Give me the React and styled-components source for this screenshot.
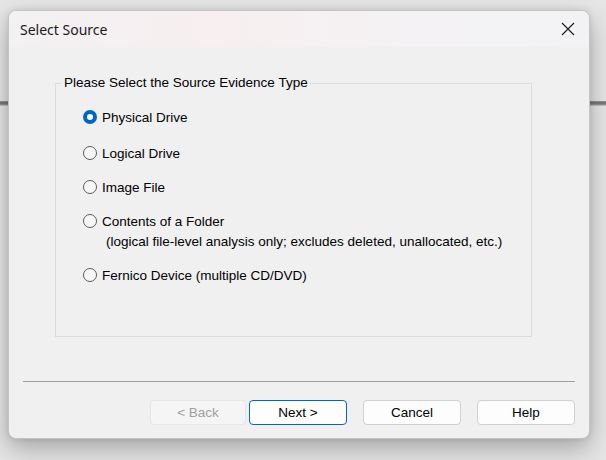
import { useState } from 'react'
import styled, { createGlobalStyle } from 'styled-components'

const GlobalStyle = createGlobalStyle`
  html, body {
    margin: 0;
    padding: 0;
  }
  body {
    width: 606px;
    height: 460px;
    overflow: hidden;
    background:
      linear-gradient(
        to bottom,
        transparent 0,
        transparent 101px,
        #9a9a9a 101px,
        #6e6e6e 103px,
        #9a9a9a 105px,
        transparent 106px
      ),
      #e6e6e6;
  }
`

const Desktop = styled.div`
  padding: 10px 16px 0 8px;
`

const Window = styled.div`
  width: 582px;
  height: 429px;
  box-sizing: border-box;
  display: flex;
  flex-direction: column;
  background: #f0f0f0;
  border: 1px solid #c4c4c4;
  border-radius: 8px;
  overflow: hidden;
  box-shadow: 0 10px 26px rgba(0, 0, 0, 0.28), 0 0 6px rgba(0, 0, 0, 0.1);
`

const TitleBar = styled.div`
  height: 36px;
  flex: none;
  display: flex;
  align-items: center;
  justify-content: space-between;
  padding-left: 11px;
  background: linear-gradient(to right, #f3f1f3 0%, #f7eff0 35%, #f4f2f4 70%, #f2f2f5 100%);
`

const Title = styled.div`
  font-family: "Noto Sans", sans-serif;
  font-size: 14px;
  color: #1a1a1a;
  margin-top: 1px;
`

const CloseButton = styled.button`
  width: 46px;
  height: 36px;
  border: none;
  background: transparent;
  display: flex;
  align-items: center;
  justify-content: center;
  padding: 0;
  margin-right: -2px;
`

const Body = styled.div`
  flex: 1;
  display: flex;
  flex-direction: column;
  padding: 28px 14px 13px;
  font-family: "Liberation Sans", Arial, sans-serif;
  font-size: 13.5px;
  color: #000;
`

const Group = styled.fieldset`
  margin: 0 43px 0 32px;
  height: 262px;
  box-sizing: border-box;
  border: 1px solid #dcdcdc;
  padding: 16px 0 0 27px;
  display: flex;
  flex-direction: column;
  gap: 14px;
`

const Legend = styled.legend`
  margin-left: -21px;
  padding: 0 2px;
  line-height: 16px;
`

const Option = styled.label`
  display: flex;
  flex-direction: column;

  &:first-of-type {
    margin-bottom: 2px;
  }
`

const OptionRow = styled.div`
  display: flex;
  align-items: center;
  height: 20px;
  gap: 5px;
  cursor: default;
`

const Radio = styled.span`
  width: 14px;
  height: 14px;
  box-sizing: border-box;
  border-radius: 50%;
  flex: none;
  border: ${p => (p.$checked ? '4px solid #0067c0' : '1px solid #5c5c5c')};
  background: ${p => (p.$checked ? '#fff' : '#f6f6f6')};
`

const Note = styled.div`
  margin: 1px 0 0 23px;
  line-height: 19px;
`

const Separator = styled.hr`
  margin: 44px 0 0;
  border: none;
  border-top: 1px solid #a0a0a0;
  height: 0;
`

const ButtonRow = styled.div`
  margin-top: 18px;
  display: flex;
  justify-content: flex-end;
  gap: 16px;
`

const NavGroup = styled.div`
  display: flex;
  gap: 3px;
`

const Button = styled.button`
  width: ${p => p.$width || 98}px;
  height: 25px;
  box-sizing: border-box;
  font-family: "Liberation Sans", Arial, sans-serif;
  font-size: 13.5px;
  color: #000;
  background: #fdfdfd;
  border: 1px solid #d0d0d0;
  border-radius: 4px;
  padding: 0;

  &.default {
    border-color: #0067c0;
  }
  &:disabled {
    color: #a0a0a0;
    background: #f5f5f5;
    border-color: #e6e6e6;
  }
`

const sources = [
  { id: 'physical', label: 'Physical Drive' },
  { id: 'logical', label: 'Logical Drive' },
  { id: 'image', label: 'Image File' },
  {
    id: 'folder',
    label: 'Contents of a Folder',
    note: '(logical file-level analysis only; excludes deleted, unallocated, etc.)',
  },
  { id: 'fernico', label: 'Fernico Device (multiple CD/DVD)' },
]

const App = () => {
  const [selected, setSelected] = useState('physical')

  return (
    <Desktop>
      <GlobalStyle />
      <Window>
        <TitleBar>
          <Title>Select Source</Title>
          <CloseButton aria-label="Close">
            <svg width="14" height="14" viewBox="0 0 14 14">
              <path d="M1 1 L13 13 M13 1 L1 13" stroke="#1a1a1a" strokeWidth="1.1" fill="none" />
            </svg>
          </CloseButton>
        </TitleBar>
        <Body>
          <Group>
            <Legend>Please Select the Source Evidence Type</Legend>
            {sources.map(src => (
              <Option key={src.id} onClick={() => setSelected(src.id)}>
                <OptionRow>
                  <Radio $checked={selected === src.id} />
                  {src.label}
                </OptionRow>
                {src.note && <Note>{src.note}</Note>}
              </Option>
            ))}
          </Group>
          <Separator />
          <ButtonRow>
            <NavGroup>
              <Button $width={96} disabled>&lt; Back</Button>
              <Button className="default">Next &gt;</Button>
            </NavGroup>
            <Button>Cancel</Button>
            <Button>Help</Button>
          </ButtonRow>
        </Body>
      </Window>
    </Desktop>
  )
}

export default App
